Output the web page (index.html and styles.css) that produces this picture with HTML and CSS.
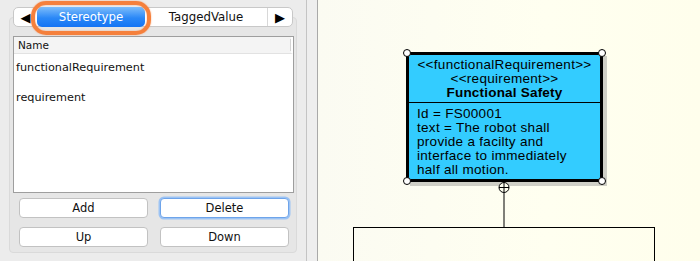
FILE: index.html
```html
<!DOCTYPE html>
<html>
<head>
<meta charset="utf-8">
<link rel="stylesheet" href="styles.css">
</head>
<body>
<div class="app">
  <aside class="panel">
    <div class="tabs">
      <span class="tab arrow">&#9664;</span>
      <span class="tab active">Stereotype</span>
      <span class="tab named">TaggedValue</span>
      <span class="tab arrow right">&#9654;</span>
    </div>
    <div class="group">
      <div class="table">
        <div class="thead"><span>Name</span></div>
        <div class="row">functionalRequirement</div>
        <div class="row">requirement</div>
      </div>
      <div class="buttons">
        <button class="btn">Add</button>
        <button class="btn focus">Delete</button>
        <button class="btn">Up</button>
        <button class="btn">Down</button>
      </div>
    </div>
  </aside>
  <div class="splitter"></div>
  <main class="canvas">
    <div class="node">
      <div class="node-head">
        <div class="ln">&lt;&lt;functionalRequirement&gt;&gt;</div>
        <div class="ln">&lt;&lt;requirement&gt;&gt;</div>
        <div class="ln title">Functional Safety</div>
      </div>
      <div class="node-body">
        <div class="ln">Id = FS00001</div>
        <div class="ln">text = The robot shall</div>
        <div class="ln">provide a facilty and</div>
        <div class="ln">interface to immediately</div>
        <div class="ln">half all motion.</div>
      </div>
      <span class="handle tl"></span>
      <span class="handle tr"></span>
      <span class="handle bl"></span>
      <span class="handle br"></span>
    </div>
    <svg class="link" width="14" height="46" viewBox="0 0 14 46">
      <line x1="7" y1="12" x2="7" y2="46" stroke="#000" stroke-width="1"/>
      <circle cx="7" cy="6.5" r="5" fill="#fffff0" stroke="#000" stroke-width="1"/>
      <line x1="2" y1="6.5" x2="12" y2="6.5" stroke="#000" stroke-width="1"/>
      <line x1="7" y1="1.5" x2="7" y2="11.5" stroke="#000" stroke-width="1"/>
    </svg>
    <div class="node2"></div>
  </main>
</div>
</body>
</html>
```
FILE: styles.css
```css
html, body {
  margin: 0;
  padding: 0;
}
body {
  width: 700px;
  height: 261px;
  overflow: hidden;
  font-family: "DejaVu Sans", Verdana, sans-serif;
}
.app {
  display: flex;
  height: 261px;
  overflow: hidden;
}
.panel {
  width: 306px;
  flex: none;
  background: #ececec;
  padding-top: 7px;
  box-sizing: border-box;
}
.tabs {
  position: relative;
  z-index: 2;
  display: flex;
  margin: 0 13px;
  height: 20px;
  box-sizing: border-box;
  background: #fff;
  border: 1px solid #c8c8c8;
  border-radius: 5px;
  font-size: 11.75px;
}
.tab {
  display: flex;
  align-items: center;
  justify-content: center;
  color: #111;
}
.tab.arrow {
  width: 23px;
  font-size: 13px;
  color: #000;
}
.tab.arrow.right {
  width: 24px;
  border-left: 1px solid #d8d8d8;
}
.tab.active {
  position: relative;
  width: 108px;
  margin: -1px 0;
  border-radius: 5px;
  color: #fff;
  background: linear-gradient(#7dbdfb, #2a88f7 55%, #1574f4);
}
.tab.active::after {
  content: "";
  position: absolute;
  left: -6px;
  right: -6px;
  top: -6px;
  bottom: -8px;
  border: 4px solid #f5803c;
  border-radius: 15px;
  box-shadow: 0 0 1.5px #f7925a, inset 0 0 1.5px #f7925a;
}
.tab.named {
  flex: 1;
}
.group {
  margin: -10px 9px 0 9px;
  padding: 18px 2px 5px 3px;
  background: #e6e6e6;
  border: 1px solid #dadada;
  border-radius: 4px;
}
.table {
  height: 157px;
  box-sizing: border-box;
  background: #fff;
  border: 1px solid #9e9e9e;
}
.thead {
  height: 16px;
  display: flex;
  align-items: center;
  padding-left: 4px;
  background: #f4f4f4;
  border-bottom: 1px solid #e2e2e2;
  border-right: 2px solid #fff;
  font-size: 10.5px;
  color: #111;
}
.thead::after {
  content: "";
  margin-left: auto;
  width: 1px;
  height: 12px;
  background: #d4d4d4;
}
.row {
  height: 30px;
  box-sizing: border-box;
  padding: 0 0 4px 2px;
  display: flex;
  align-items: center;
  font-size: 11.25px;
  color: #111;
}
.buttons {
  display: grid;
  grid-template-columns: 129px 129px;
  column-gap: 12px;
  row-gap: 9px;
  margin-top: 5px;
  padding-left: 6px;
}
.btn {
  height: 20px;
  padding: 0;
  margin: 0;
  background: #fff;
  border: 1px solid #c2c2c2;
  border-radius: 4px;
  font-family: "DejaVu Sans", Verdana, sans-serif;
  font-size: 11.5px;
  color: #111;
}
.btn.focus {
  border-color: #6ea4ea;
  box-shadow: 0 0 0 1.5px #9cc3f4;
}
.splitter {
  width: 10px;
  flex: none;
  background: #eeeeee;
  border-left: 1px solid #c4c4c4;
  border-right: 1px solid #a9a9a9;
}
.canvas {
  flex: 1;
  position: relative;
  overflow: hidden;
  background: linear-gradient(90deg, #fbfbf2, #fffff0 60%, #fffeec);
  font-family: "Liberation Sans", Arial, sans-serif;
}
.node {
  position: absolute;
  left: 88px;
  top: 52px;
  width: 197px;
  height: 130px;
  box-sizing: border-box;
  border: 3px solid #000;
  background: #33ccff;
  box-shadow: 4px 4px 0 #cfcfc6;
  display: flex;
  flex-direction: column;
  font-size: 13.5px;
  color: #000;
}
.ln {
  height: 14px;
  line-height: 14px;
  white-space: nowrap;
}
.node-head {
  text-align: center;
  padding: 3px 0 2px;
  border-bottom: 1px solid #000;
  letter-spacing: 0.3px;
}
.title {
  font-weight: bold;
  letter-spacing: 0.2px;
}
.node-body {
  padding: 4px 0 0 8px;
  letter-spacing: 0.3px;
}
.handle {
  position: absolute;
  width: 6px;
  height: 6px;
  border: 1px solid #000;
  border-radius: 50%;
  background: #fff;
}
.handle.tl { left: -6px; top: -6px; }
.handle.tr { right: -6px; top: -6px; }
.handle.bl { left: -6px; bottom: -6px; }
.handle.br { right: -6px; bottom: -6px; }
.link {
  position: absolute;
  left: 179px;
  top: 181px;
}
.node2 {
  position: absolute;
  left: 35px;
  top: 227px;
  width: 302px;
  height: 60px;
  box-sizing: border-box;
  border: 1px solid #000;
}
```
